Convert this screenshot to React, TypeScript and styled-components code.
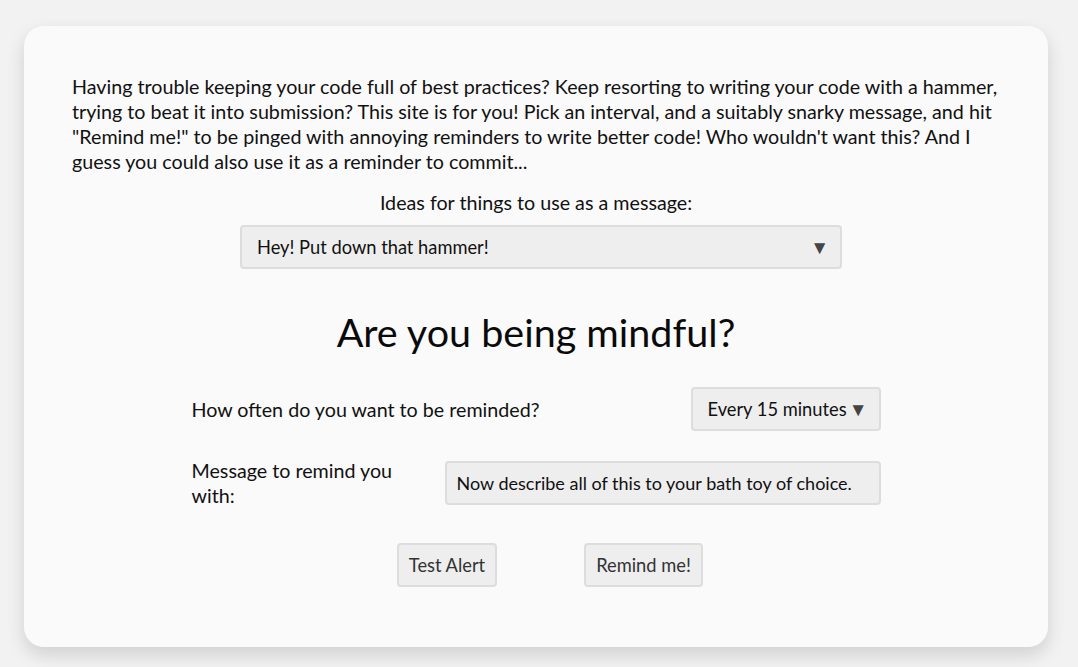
import React from "react";
import styled, { createGlobalStyle } from "styled-components";

const GlobalStyle = createGlobalStyle`
  html, body {
    margin: 0;
    padding: 0;
    background: #f2f2f2;
    font-family: Lato, "Open Sans", sans-serif;
    color: #111111;
  }
`;

const Page = styled.div`
  padding: 26px 30px 21px 24px;
`;

const Card = styled.div`
  background: #fafafa;
  border-radius: 20px;
  box-shadow: 0 8px 18px rgba(0, 0, 0, 0.14);
  padding: 48px 48px 60px 48px;
  display: flex;
  flex-direction: column;
  align-items: center;
`;

const Intro = styled.p`
  margin: 0;
  align-self: stretch;
  font-size: 19.7px;
  line-height: 25px;
`;

const IdeasLabel = styled.div`
  margin-top: 16px;
  font-size: 19.7px;
  line-height: 25px;
`;

const IdeasSelect = styled.div`
  margin: 10px 0 0 10px;
`;

const SelectBox = styled.div<{ $width: number }>`
  box-sizing: border-box;
  width: ${p => p.$width}px;
  height: 44px;
  display: flex;
  align-items: center;
  justify-content: space-between;
  padding: 0 11px 0 15px;
  background: #eeeeee;
  border: 2px solid #dddddd;
  border-radius: 4px;
  font-size: 18.3px;
  color: #111111;
`;

const Arrow = styled.span`
  font-size: 19px;
  color: #444444;
`;

const Heading = styled.h1`
  margin: 39px 0 31px 0;
  font-size: 39.5px;
  line-height: 48px;
  font-weight: 400;
  color: #0a0a0a;
`;

const Form = styled.div`
  width: 689px;
  display: flex;
  flex-direction: column;
  gap: 27px;
`;

const Row = styled.div`
  display: flex;
  align-items: center;
  justify-content: space-between;
`;

const Label = styled.label<{ $width?: number }>`
  font-size: 19.7px;
  line-height: 25px;
  width: ${p => (p.$width ? `${p.$width}px` : "auto")};
`;

const TextInput = styled.div`
  box-sizing: border-box;
  width: 436px;
  height: 44px;
  display: flex;
  align-items: center;
  padding: 0 10px;
  background: #eeeeee;
  border: 2px solid #dddddd;
  border-radius: 4px;
  font-size: 18px;
  color: #111111;
`;

const Buttons = styled.div`
  display: flex;
  justify-content: center;
  gap: 87px;
  margin-top: 35px;
  padding-left: 28px;
`;

const Button = styled.button<{ $width: number }>`
  box-sizing: border-box;
  width: ${p => p.$width}px;
  height: 44px;
  background: #eeeeee;
  border: 2px solid #dddddd;
  border-radius: 4px;
  font-family: Lato, "Open Sans", sans-serif;
  font-size: 18.3px;
  color: #333333;
  padding: 0;
`;

export default function App() {
  return (
    <>
      <GlobalStyle />
      <Page>
        <Card>
          <Intro>
            Having trouble keeping your code full of best practices? Keep resorting to writing your code with a hammer,
            trying to beat it into submission? This site is for you! Pick an interval, and a suitably snarky message, and hit
            "Remind me!" to be pinged with annoying reminders to write better code! Who wouldn't want this? And I
            guess you could also use it as a reminder to commit...
          </Intro>
          <IdeasLabel>Ideas for things to use as a message:</IdeasLabel>
          <IdeasSelect>
            <SelectBox $width={602}>
              <span>Hey! Put down that hammer!</span>
              <Arrow>▼</Arrow>
            </SelectBox>
          </IdeasSelect>
          <Heading>Are you being mindful?</Heading>
          <Form>
            <Row>
              <Label>How often do you want to be reminded?</Label>
              <SelectBox $width={190}>
                <span>Every 15 minutes</span>
                <Arrow>▼</Arrow>
              </SelectBox>
            </Row>
            <Row>
              <Label $width={230}>Message to remind you with:</Label>
              <TextInput>Now describe all of this to your bath toy of choice.</TextInput>
            </Row>
          </Form>
          <Buttons>
            <Button $width={100}>Test Alert</Button>
            <Button $width={119}>Remind me!</Button>
          </Buttons>
        </Card>
      </Page>
    </>
  );
}
